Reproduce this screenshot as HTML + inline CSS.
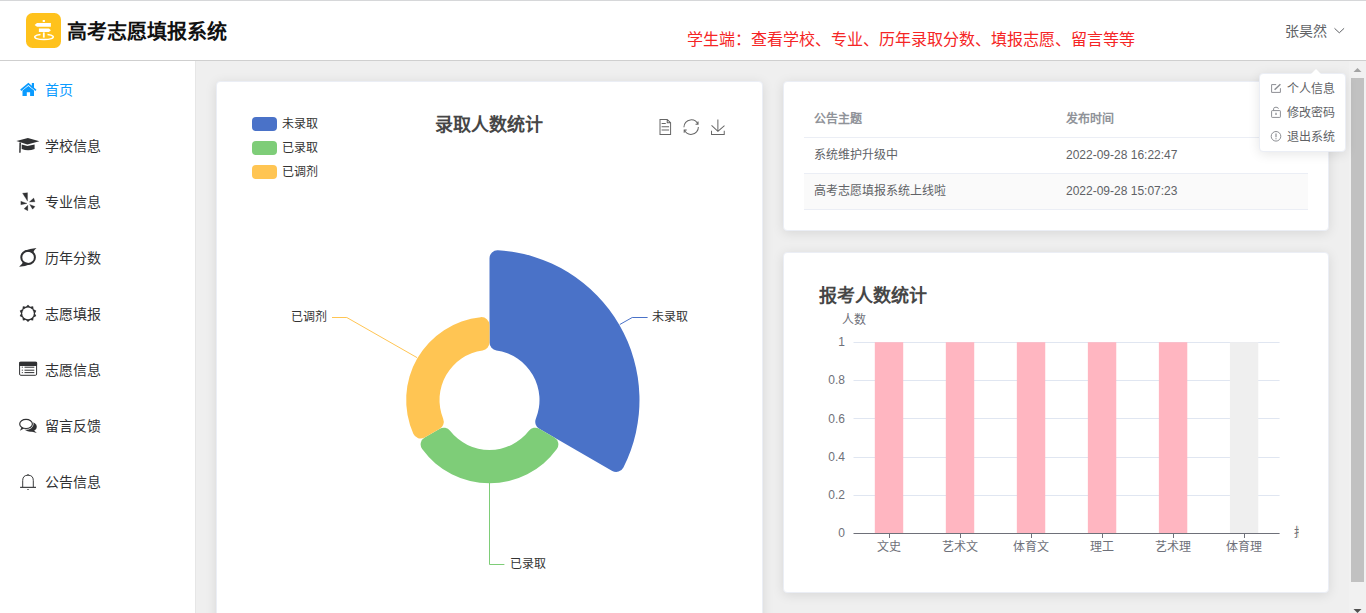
<!DOCTYPE html>
<html lang="zh-CN">
<head>
<meta charset="utf-8">
<style>
*{box-sizing:border-box;margin:0;padding:0}
html,body{width:1366px;height:613px;overflow:hidden;background:#fff;font-family:"Liberation Sans",sans-serif;color:#303133}
.abs{position:absolute}
#topline{position:absolute;left:0;top:0;width:1366px;height:1px;background:#d6d7d9}
#hline{position:absolute;left:0;top:60px;width:1366px;height:1px;background:#cfcfcf}
#title{position:absolute;left:67px;top:20px;font-size:20px;font-weight:bold;color:#111;line-height:24px;white-space:nowrap}
#notice{position:absolute;left:687px;top:29px;font-size:16px;color:#f52525;line-height:22px;white-space:nowrap}
#user{position:absolute;left:1285px;top:21px;font-size:14px;color:#606266;line-height:20px;white-space:nowrap}
#sideb{position:absolute;left:195px;top:61px;width:1px;height:552px;background:#e6e6e6}
.mi{position:absolute;left:45px;font-size:14px;line-height:20px;color:#303133;white-space:nowrap}
#main{position:absolute;left:196px;top:61px;width:1170px;height:552px;background:#efefef;overflow:hidden}
.card{position:absolute;background:#fff;border:1px solid #ebeef5;border-radius:4px;box-shadow:0 2px 12px 0 rgba(0,0,0,.1)}
.lbl{position:absolute;font-size:12px;line-height:16px;white-space:nowrap;color:#333}
.yl{left:805px;width:40px;text-align:right;color:#6e7079}
.xl{top:539px;width:80px;text-align:center;color:#6e7079}
.ctitle{position:absolute;font-size:18px;font-weight:bold;color:#464646;line-height:24px;white-space:nowrap}
.leg{position:absolute;left:252px;width:25px;height:14px;border-radius:4px}
.legt{position:absolute;left:282px;font-size:12px;line-height:16px;color:#333;white-space:nowrap}
.th{position:absolute;font-size:12px;font-weight:bold;color:#909399;line-height:16px;white-space:nowrap}
.td{position:absolute;font-size:12px;color:#606266;line-height:16px;white-space:nowrap}
#sb{position:absolute;left:1349px;top:61px;width:17px;height:552px;background:#f1f1f1}
#thumb{position:absolute;left:2px;top:17px;width:13px;height:504px;background:#c1c1c1}
#dd{position:absolute;left:1259px;top:73px;width:87px;height:79px;background:#fff;border:1px solid #ebeef5;border-radius:4px;box-shadow:0 2px 12px 0 rgba(0,0,0,.1)}
.ddi{position:absolute;left:1287px;font-size:12px;color:#606266;line-height:16px;white-space:nowrap}
</style>
</head>
<body>
<div id="topline"></div>
<div id="hline"></div>
<svg class="abs" style="left:26px;top:13px" width="35" height="35" viewBox="0 0 35 35">
<rect x="0" y="0" width="35" height="35" rx="6.5" fill="#ffc21c"/>
<rect x="16.7" y="7" width="2.2" height="2" fill="#fff"/>
<path d="M8.6,11.9 L11,10 H24.9 V13.7 H11 Z" fill="#fff"/>
<path d="M12.9,15.4 H22.9 L24.9,17.25 L22.9,19.1 H12.9 Z" fill="#fff"/>
<rect x="16.9" y="19.4" width="1.8" height="5.2" fill="#fff"/>
<path d="M14.5,21.6 A9.3,2.6 0 1 0 21.5,21.6" fill="none" stroke="#fff" stroke-width="1.5"/>
</svg>
<div id="title">高考志愿填报系统</div>
<div id="notice">学生端：查看学校、专业、历年录取分数、填报志愿、留言等等</div>
<div id="user">张昊然</div>
<svg class="abs" style="left:1333px;top:26px" width="13" height="10" viewBox="0 0 13 10"><polyline points="1.5,2.3 6.3,6.8 11.1,2.3" fill="none" stroke="#606266" stroke-width="1"/></svg>

<div id="sideb"></div>
<!-- sidebar icons -->
<svg class="abs" style="left:0;top:61px" width="195" height="552" viewBox="0 61 195 552">
<g fill="#0a9bff">
<path d="M20.2,89.6 L28.4,82.8 L36.5,89.7 L35.4,91 L28.4,85.1 L21.3,91 Z"/>
<rect x="31.8" y="83" width="2.2" height="5"/>
<path d="M22.5,90.6 L28.4,86 L34,90.6 V96 H30.1 V92.2 H26.8 V96 H22.5 Z"/>
</g>
<g fill="#303133">
<path d="M16.4,141 L27.9,138 L39.4,141.3 L27.4,144.6 Z"/>
<path d="M21.7,144.6 L27.4,146 L34.6,144.6 V149 Q28,151.5 21.7,149 Z"/>
<path d="M19.4,142.5 L21,142.5 L20.6,152.8 L19.2,152.8 Z"/>
<path d="M22.56,193.22 L27.53,192.68 L27.53,201.11 Z" stroke="#303133" stroke-width="0.3" stroke-linejoin="round"/>
<path d="M29.36,202.00 L33.68,198.11 L34.97,201.78 Z" stroke="#303133" stroke-width="0.3" stroke-linejoin="round"/>
<path d="M20.85,201.26 L20.85,204.71 L27.00,203.42 Z" stroke="#303133" stroke-width="0.3" stroke-linejoin="round"/>
<path d="M24.12,208.84 L27.79,205.17 L27.79,210.68 Z" stroke="#303133" stroke-width="0.3" stroke-linejoin="round"/>
<path d="M29.69,204.43 L34.99,206.59 L32.61,209.18 Z" stroke="#303133" stroke-width="0.3" stroke-linejoin="round"/>
</g>
<g fill="none" stroke="#303133">
<ellipse cx="28.1" cy="257.4" rx="6.8" ry="6.6" stroke-width="2"/>
</g>
<g fill="#303133">
<path d="M24,251.3 Q30,248.5 36.5,248.1 Q33.5,250.5 33.2,252.5 Z"/>
<path d="M32.2,263.5 Q26,266.3 19.1,266.8 Q22,264.5 23,262.3 Z"/>
</g>
<polygon points="28.00,304.70 30.13,306.84 33.11,306.36 33.58,309.34 36.27,310.71 34.90,313.40 36.27,316.09 33.58,317.46 33.11,320.44 30.13,319.96 28.00,322.10 25.87,319.96 22.89,320.44 22.42,317.46 19.73,316.09 21.10,313.40 19.73,310.71 22.42,309.34 22.89,306.36 25.87,306.84" fill="#303133"/><circle cx="28" cy="313.4" r="5.8" fill="#fff"/>

<rect x="19.6" y="362.3" width="17" height="13" rx="1.2" fill="none" stroke="#303133" stroke-width="1"/>
<rect x="19.1" y="361.8" width="18" height="4.3" rx="1" fill="#303133"/>
<g fill="#303133"><rect x="21.8" y="366.7" width="1" height="1"/><rect x="21.8" y="369.7" width="1" height="1"/><rect x="21.8" y="372.1" width="1" height="1"/>
<rect x="24.5" y="366.7" width="9.8" height="1"/><rect x="24.5" y="369.7" width="9.8" height="1"/><rect x="24.5" y="372.1" width="9.8" height="1"/></g>
<ellipse cx="30.2" cy="426.8" rx="6.6" ry="4.9" fill="#303133"/>
<path d="M33.5,430 L36.8,432.9 L30.5,431.2 Z" fill="#303133"/>
<ellipse cx="26.05" cy="423.95" rx="6.35" ry="4.55" fill="#fff" stroke="#fff" stroke-width="2.4"/>
<ellipse cx="26.05" cy="423.95" rx="6.35" ry="4.55" fill="#fff" stroke="#303133" stroke-width="1.15"/>
<path d="M21.6,427.3 L19.9,430.8 L24,428.6 Z" fill="#303133"/>
<path d="M22.7,487 V480.5 Q22.7,475.2 28,475.2 Q33.3,475.2 33.3,480.5 V487" fill="none" stroke="#303133" stroke-width="0.95"/>
<rect x="20.1" y="486.8" width="15.9" height="1.1" fill="#303133"/>
<rect x="27.4" y="489" width="1.2" height="1" fill="#303133"/>
<rect x="27.5" y="474" width="1" height="1.3" fill="#303133"/>
</svg>
<div class="mi" style="top:80px;color:#0a9bff">首页</div>
<div class="mi" style="top:136px">学校信息</div>
<div class="mi" style="top:192px">专业信息</div>
<div class="mi" style="top:248px">历年分数</div>
<div class="mi" style="top:304px">志愿填报</div>
<div class="mi" style="top:360px">志愿信息</div>
<div class="mi" style="top:416px">留言反馈</div>
<div class="mi" style="top:472px">公告信息</div>

<div id="main">
  <div class="card" style="left:20px;top:20px;width:547px;height:560px"></div>
  <div class="card" style="left:587px;top:20px;width:546px;height:150px"></div>
  <div class="card" style="left:587px;top:191px;width:546px;height:341px"></div>
</div>

<!-- pie card -->
<div class="leg" style="top:117px;background:#4a72c8"></div><div class="legt" style="top:116px">未录取</div>
<div class="leg" style="top:141px;background:#7ecd78"></div><div class="legt" style="top:140px">已录取</div>
<div class="leg" style="top:165px;background:#ffc553"></div><div class="legt" style="top:164px">已调剂</div>
<div class="ctitle" style="left:435px;top:113px">录取人数统计</div>
<svg class="abs" style="left:0;top:0" width="1366" height="613" viewBox="0 0 1366 613">
<path d="M17.5,17.3H33 M17.5,17.3H33 M45.4,29.5h-28 M11.5,2v56H51V14.8L38.4,2H11.5z M38.4,2.2v12.7H51 M45.4,41.7h-28" transform="translate(656.93,118.86) scale(0.2679)" fill="none" stroke="#666" stroke-width="3.733"/><path d="M3.8,33.4 M47,18.9h9.8V8.7 M56.3,20.1 C52.1,9,40.5,0.6,26.8,2.1C12.6,3.7,1.6,16.2,2.1,30.6 M13,41.1H3.1v10.2 M3.7,39.9c4.2,11.1,15.8,19.5,29.5,18 c14.2-1.6,25.2-14.1,24.7-28.5" transform="translate(683.38,119.36) scale(0.2586)" fill="none" stroke="#666" stroke-width="3.867"/><path d="M4.7,22.9L29.3,45.5L54.7,23.4M4.6,43.6L4.6,58L53.8,58L53.8,43.6M29.2,45.1L29.2,0" transform="translate(710.33,119.50) scale(0.2586)" fill="none" stroke="#666" stroke-width="3.867"/>
<path d="M489.50,258.23 A8.00,8.00 0 0 1 497.95,250.24 A150.00,150.00 0 0 1 623.42,467.56 A8.00,8.00 0 0 1 612.28,470.89 L539.25,428.72 A8.00,8.00 0 0 1 535.84,418.79 A50.00,50.00 0 0 0 496.40,350.48 A8.00,8.00 0 0 1 489.50,342.55 Z" fill="#4a72c8"/>
<path d="M554.37,437.45 A8.00,8.00 0 0 1 556.83,449.09 A83.33,83.33 0 0 1 422.17,449.09 A8.00,8.00 0 0 1 424.63,437.45 L439.75,428.72 A8.00,8.00 0 0 1 450.06,430.73 A50.00,50.00 0 0 0 528.94,430.73 A8.00,8.00 0 0 1 539.25,428.72 Z" fill="#7ecd78"/>
<path d="M424.63,437.45 A8.00,8.00 0 0 1 413.32,433.77 A83.33,83.33 0 0 1 480.65,317.14 A8.00,8.00 0 0 1 489.50,325.10 L489.50,342.55 A8.00,8.00 0 0 1 482.60,350.48 A50.00,50.00 0 0 0 443.16,418.79 A8.00,8.00 0 0 1 439.75,428.72 Z" fill="#ffc553"/>
<polyline points="619.8,324.5 632.2,317.5 647.6,317.5" fill="none" stroke="#4a72c8" stroke-width="1"/>
<polyline points="417,357.6 346.8,317.5 332,317.5" fill="none" stroke="#ffc553" stroke-width="1"/>
<polyline points="489.5,483 489.5,564.5 504.4,564.5" fill="none" stroke="#7ecd78" stroke-width="1"/>
<line x1="853.5" y1="342.5" x2="1279.6" y2="342.5" stroke="#e0e6f1" stroke-width="1"/>
<line x1="853.5" y1="380.5" x2="1279.6" y2="380.5" stroke="#e0e6f1" stroke-width="1"/>
<line x1="853.5" y1="418.5" x2="1279.6" y2="418.5" stroke="#e0e6f1" stroke-width="1"/>
<line x1="853.5" y1="457.5" x2="1279.6" y2="457.5" stroke="#e0e6f1" stroke-width="1"/>
<line x1="853.5" y1="495.5" x2="1279.6" y2="495.5" stroke="#e0e6f1" stroke-width="1"/>

<rect x="874.81" y="342.20" width="28.4" height="191.00" fill="#ffb6c1"/>
<rect x="945.82" y="342.20" width="28.4" height="191.00" fill="#ffb6c1"/>
<rect x="1016.84" y="342.20" width="28.4" height="191.00" fill="#ffb6c1"/>
<rect x="1087.86" y="342.20" width="28.4" height="191.00" fill="#ffb6c1"/>
<rect x="1158.87" y="342.20" width="28.4" height="191.00" fill="#ffb6c1"/>
<rect x="1229.89" y="342.20" width="28.4" height="191.00" fill="#efefef"/>

<line x1="853.5" y1="533.5" x2="1279.6" y2="533.5" stroke="#6e7079" stroke-width="1"/>
<line x1="889.5" y1="533" x2="889.5" y2="538" stroke="#6e7079" stroke-width="1"/>
<line x1="960.5" y1="533" x2="960.5" y2="538" stroke="#6e7079" stroke-width="1"/>
<line x1="1031.5" y1="533" x2="1031.5" y2="538" stroke="#6e7079" stroke-width="1"/>
<line x1="1102.5" y1="533" x2="1102.5" y2="538" stroke="#6e7079" stroke-width="1"/>
<line x1="1173.5" y1="533" x2="1173.5" y2="538" stroke="#6e7079" stroke-width="1"/>
<line x1="1244.5" y1="533" x2="1244.5" y2="538" stroke="#6e7079" stroke-width="1"/>

</svg>
<div class="lbl" style="left:652px;top:309px">未录取</div>
<div class="lbl" style="left:291px;top:309px">已调剂</div>
<div class="lbl" style="left:510px;top:556px">已录取</div>

<!-- table card -->
<div class="th" style="left:814px;top:111px">公告主题</div>
<div class="th" style="left:1066px;top:111px">发布时间</div>
<div class="abs" style="left:804px;top:137px;width:504px;height:1px;background:#ebeef5"></div>
<div class="td" style="left:814px;top:147px">系统维护升级中</div>
<div class="td" style="left:1066px;top:147px">2022-09-28 16:22:47</div>
<div class="abs" style="left:804px;top:174px;width:504px;height:35px;background:#fafafa"></div>
<div class="abs" style="left:804px;top:173px;width:504px;height:1px;background:#ebeef5"></div>
<div class="td" style="left:814px;top:183px">高考志愿填报系统上线啦</div>
<div class="td" style="left:1066px;top:183px">2022-09-28 15:07:23</div>
<div class="abs" style="left:804px;top:209px;width:504px;height:1px;background:#ebeef5"></div>

<!-- bar card -->
<div class="ctitle" style="left:819px;top:284px">报考人数统计</div>
<div class="lbl" style="left:842px;top:312px;color:#6e7079">人数</div>
<div class="lbl yl" style="top:334.2px">1</div>
<div class="lbl yl" style="top:372.4px">0.8</div>
<div class="lbl yl" style="top:410.6px">0.6</div>
<div class="lbl yl" style="top:448.8px">0.4</div>
<div class="lbl yl" style="top:487.0px">0.2</div>
<div class="lbl yl" style="top:525.2px">0</div>

<div class="lbl xl" style="left:849.0px">文史</div>
<div class="lbl xl" style="left:920.0px">艺术文</div>
<div class="lbl xl" style="left:991.0px">体育文</div>
<div class="lbl xl" style="left:1062.1px">理工</div>
<div class="lbl xl" style="left:1133.1px">艺术理</div>
<div class="lbl xl" style="left:1204.1px">体育理</div>

<div class="abs" style="left:1294px;top:525px;width:5px;height:16px;overflow:hidden"><div class="lbl" style="left:0;top:0;color:#6e7079">报</div></div>

<div id="sb"><div id="thumb"></div></div>
<svg class="abs" style="left:1349px;top:61px" width="17" height="552" viewBox="0 0 17 552">
<polygon points="4.5,11 8.5,7 12.5,11" fill="#a3a3a3"/>
<polygon points="4.5,548 8.5,552 12.5,548" fill="#505050"/>
</svg>

<!-- dropdown -->
<div id="dd"></div>
<svg class="abs" style="left:1308px;top:67px" width="16" height="9" viewBox="0 0 16 9"><polygon points="2,8 8,2 14,8" fill="#fff"/></svg>
<svg class="abs" style="left:1260px;top:74px" width="85" height="78" viewBox="0 0 85 78" fill="none" stroke="#8d8f94" stroke-width="1">
<path d="M16.2,10.6 H11.6 V18.4 H20.4 V14.2"/><path d="M14.6,15.8 L20.4,10.2" stroke-width="1.5"/>
<rect x="11.6" y="36.6" width="8.8" height="6.8" rx="0.6"/><path d="M13.6,36.6 V34.8 Q13.6,33.2 16,33.2 Q18.4,33.2 18.4,34.8"/><path d="M16,38.8 V41" stroke-width="1.3"/>
<circle cx="16" cy="62.3" r="4.8"/><path d="M16,59.6 V63.2" stroke-width="1.2"/><path d="M16,64.3 V65.3" stroke-width="1.2"/>
</svg>
<div class="ddi" style="top:81px">个人信息</div>
<div class="ddi" style="top:105px">修改密码</div>
<div class="ddi" style="top:129px">退出系统</div>
</body>
</html>
